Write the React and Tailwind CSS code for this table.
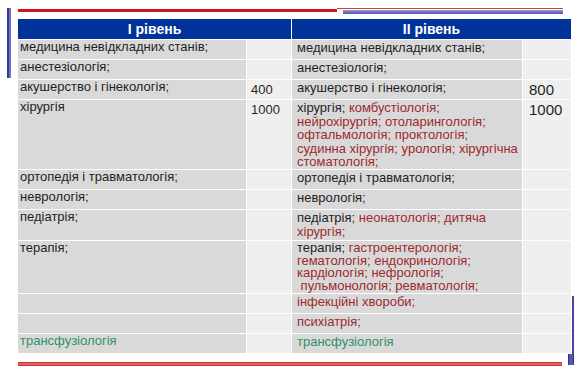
import React from 'react';

// Two-level table: left = I рівень, right = II рівень
const ROWS = [
  {
    h: 'h-[19px]',
    left: 'медицина невідкладних станів;',
    right: [['медицина невідкладних станів;', 'k']],
  },
  { h: 'h-[19px]', left: 'анестезіологія;', right: [['анестезіологія;', 'k']] },
  {
    h: 'h-[19px]',
    left: 'акушерство і гінекологія;',
    n1: '400',
    right: [['акушерство і гінекологія;', 'k']],
    n2: '800',
  },
  {
    h: 'h-[69px]',
    lead: 'leading-[13.5px]',
    left: 'хірургія',
    n1: '1000',
    right: [
      ['хірургія; ', 'k'],
      ['комбустіологія;', 'r'],
      ['', 'br'],
      ['нейрохірургія; отоларингологія;', 'r'],
      ['', 'br'],
      ['офтальмологія; проктологія;', 'r'],
      ['', 'br'],
      ['судинна хірургія; урологія; хірургічна', 'r'],
      ['', 'br'],
      ['стоматологія;', 'r'],
    ],
    n2: '1000',
  },
  { h: 'h-[19px]', left: 'ортопедія і травматологія;', right: [['ортопедія і травматологія;', 'k']] },
  { h: 'h-[19px]', left: 'неврологія;', right: [['неврологія;', 'k']] },
  {
    h: 'h-[30px]',
    lead: 'leading-[14px]',
    left: 'педіатрія;',
    right: [
      ['педіатрія; ', 'k'],
      ['неонатологія; дитяча', 'r'],
      ['', 'br'],
      ['хірургія;', 'r'],
    ],
  },
  {
    h: 'h-[52px]',
    lead: 'leading-[12.5px]',
    left: 'терапія;',
    right: [
      ['терапія; ', 'k'],
      ['гастроентерологія;', 'r'],
      ['', 'br'],
      ['гематологія; ендокринологія;', 'r'],
      ['', 'br'],
      ['кардіологія; нефрологія;', 'r'],
      ['', 'br'],
      ['\u00a0пульмонологія; ревматологія;', 'r'],
    ],
  },
  { h: 'h-[19px]', left: '', right: [['інфекційні хвороби;', 'r']] },
  { h: 'h-[19px]', left: '', right: [['психіатрія;', 'r']] },
  {
    h: 'h-[19px]',
    left: 'трансфузіологія',
    green: true,
    right: [['трансфузіологія', 'g']],
  },
];

const TONE = {
  k: 'text-[#1f1f1f]',
  r: 'text-[#9e2a2e]',
  g: 'text-[#2e9462]',
};

function RichText({ parts }) {
  return parts.map(([text, tone], i) =>
    tone === 'br' ? <br key={i} /> : (
      <span key={i} className={TONE[tone]}>{text}</span>
    )
  );
}

export default function App() {
  return (
    <div className="flex w-[580px] h-[373px] bg-white overflow-hidden font-['Liberation_Sans',Arial,sans-serif]">
      {/* left gutter with the lilac stripe */}
      <div className="w-[18px] shrink-0 pl-[7px] pt-[8px]">
        <div className="w-[4px] h-[70px] bg-[#7474c4] border-l-2 border-[#34349c]" />
      </div>

      <div className="w-[553px] shrink-0 flex flex-col">
        {/* top rules */}
        <div className="h-[19px] flex items-start">
          <div className="w-[319px] h-[3px] mt-[9px] bg-[#cf1515]" />
          <div className="w-[226px] flex flex-col mt-[8px]">
            <div className="h-px bg-[#d83a3a]" />
            <div className="ml-[6px] mt-px h-[4px] bg-gradient-to-b from-[#9a9ad6] to-[#5252aa]" />
          </div>
        </div>

        <div className="grid grid-cols-[228px_44px_230px_48px] gap-px">
          <div className="col-span-2 h-[20px] bg-[#003399] flex items-center justify-center text-white font-bold text-[14px] leading-none">
            І рівень
          </div>
          <div className="col-span-2 h-[20px] bg-[#003399] flex items-center justify-center text-white font-bold text-[14px] leading-none">
            ІІ рівень
          </div>

          {ROWS.map((row, i) => (
            <React.Fragment key={i}>
              <div
                className={`${row.h} bg-[#d9d9d9] pl-[2px] text-[13px] leading-[14px] ${
                  row.green ? 'text-[#2e9462]' : 'text-[#1f1f1f]'
                }`}
              >
                {row.left}
              </div>
              <div className={`${row.h} bg-[#efefef] pl-[4px] pt-[3px] text-[13px] leading-[14px] text-[#1f1f1f]`}>
                {row.n1}
              </div>
              <div
                className={`${row.h} bg-[#d9d9d9] pl-[5px] pt-px text-[13px] ${
                  row.lead || 'leading-[13px]'
                } whitespace-nowrap overflow-hidden`}
              >
                <RichText parts={row.right} />
              </div>
              <div className={`${row.h} bg-[#efefef] pl-[6px] pt-[2px] text-[15px] leading-[16px] text-[#1f1f1f]`}>
                {row.n2}
              </div>
            </React.Fragment>
          ))}
        </div>

        {/* bottom rule */}
        <div className="mt-[9px] w-[544px] h-[4px] bg-[#e66060] border-y border-[#d23030]" />
      </div>

      {/* right gutter with the closing stripe */}
      <div className="w-[9px] shrink-0 flex flex-col items-start justify-end pb-[8px]">
        <div className="ml-px w-[2px] h-[58px] bg-[#4646aa]" />
        <div className="-ml-[3px] w-[6px] h-[11px] bg-[#5656b0] border-x border-[#2f2f96]" />
      </div>
    </div>
  );
}
